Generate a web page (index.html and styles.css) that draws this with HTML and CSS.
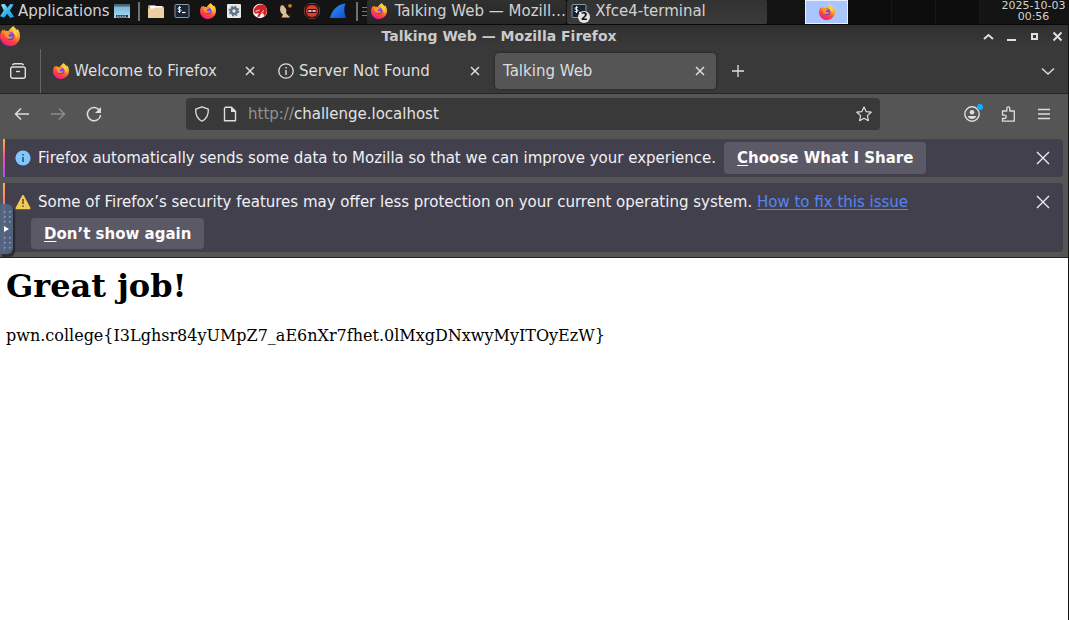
FILE: index.html
```html
<!DOCTYPE html>
<html lang="en">
<head>
<meta charset="utf-8">
<title>Talking Web</title>
<link rel="stylesheet" href="styles.css">
</head>
<body>
<svg class="defs" aria-hidden="true">
  <defs>
    <linearGradient id="flame" x1="0.8" y1="0" x2="0.3" y2="1">
      <stop offset="0" stop-color="#fff04a"/><stop offset="0.35" stop-color="#ffa52b"/><stop offset="0.65" stop-color="#ff4a3d"/><stop offset="1" stop-color="#f0138f"/>
    </linearGradient>
    <linearGradient id="globe" x1="0.5" y1="0" x2="0.5" y2="1">
      <stop offset="0" stop-color="#9a4dff"/><stop offset="1" stop-color="#5540d0"/>
    </linearGradient>
    <linearGradient id="fin" x1="0" y1="0" x2="1" y2="1">
      <stop offset="0" stop-color="#3c94ff"/><stop offset="1" stop-color="#0750c8"/>
    </linearGradient>
    <linearGradient id="xblue" x1="0" y1="0" x2="1" y2="1">
      <stop offset="0" stop-color="#b5ecff"/><stop offset="0.5" stop-color="#35b9f1"/><stop offset="1" stop-color="#0e9ce4"/>
    </linearGradient>
    <linearGradient id="desk" x1="0" y1="0" x2="0" y2="1">
      <stop offset="0" stop-color="#6fb0d2"/><stop offset="1" stop-color="#a9dcf3"/>
    </linearGradient>
    <symbol id="firefox" viewBox="0 0 16 16">
      <path fill="url(#flame)" d="M10.7 0c.6 1.2 2 2 2.8 3.2.3-.3.4-.6.4-1 1.600 1.600 2.100 3.800 2.100 5.900 0 4.400-3.600 7.900-8 7.900S0 12.500 0 8.200c0-2.100.8-4 2.100-5.500l.3 1.200 1.200-1.200.5 1.200c.8-.3 1.800-.2 2.600.3C7.600 2.400 9.100 1.300 10.700 0z"/>
      <circle cx="8.200" cy="7.800" r="3.300" fill="url(#globe)"/>
      <path fill="#ff9529" d="M3.600 4.200c1.300-.5 2.800-.2 3.600.8l1.700.3c-.4 1-1.600 1-2 1.700-.3.600 0 1.300.8 1.500 1 .3 1.700-.5 2.700.1-.6 1-1.800 1.600-3 1.500C4.800 9.900 3 7.200 3.600 4.200z"/>
      <path fill="#ffd43c" d="M10.800 2.200c2.600 2 3.600 5.200 2.300 8 .1-2-.7-3.300-2-4.300-1-.8-1.300-2.100-.3-3.700z"/>
    </symbol>
    <symbol id="terminal" viewBox="0 0 16 16">
      <rect x="1" y="1.500" width="14" height="13" rx="1" fill="#172536" stroke="#8a98a2"/>
      <path d="M7 4.500H5.400Q4 4.500 4 5.500T5.400 6.500Q7 6.500 7 7.500T5.400 8.500H3.800M5.500 3v7" fill="none" stroke="#fff" stroke-width="0.900"/>
      <path d="M8 9.500h3.500" stroke="#fff" stroke-width="1.200"/>
    </symbol>
    <symbol id="close" viewBox="0 0 16 16"><path d="M4 4l8 8M12 4l-8 8" stroke="currentColor" stroke-width="1.500" fill="none"/></symbol>
    <symbol id="dismiss" viewBox="0 0 16 16"><path d="M2 2l12 12M14 2L2 14" stroke="currentColor" stroke-width="1.300" fill="none"/></symbol>
  </defs>
</svg>

<header class="panel">
  <button class="apps" type="button">
    <svg viewBox="0 0 16 16"><path fill="url(#xblue)" d="M1 1l4-.5 3 4 3-4 3.500.5-4 6.500L15 14l-4 1.500-3.500-4.500-3 4L0 13.500l4-6z"/></svg>
    <span>Applications</span>
  </button>
  <nav class="launchers" aria-label="Launchers">
    <button type="button" aria-label="Show desktop"><svg viewBox="0 0 16 16"><path fill="url(#desk)" d="M0 1.500h16V15H0z"/><path fill="#546874" d="M0 1.500h16v2H0z"/><path fill="#26353e" d="M2 12h12v2.500H2z"/><path d="M3 13.200h10" stroke="#bde9ff" stroke-dasharray="1.500 1"/></svg></button>
    <i class="rule"></i>
    <button type="button" aria-label="Files"><svg viewBox="0 0 16 16"><path fill="#c49c6b" d="M1 2h6l1 1h7l1 2v10H0V3z"/><path fill="#fff" d="M2 3h12v4H2z"/><path fill="#edcfa4" d="M0 5.500h5.500l1-1H16V15H0z"/></svg></button>
    <button type="button" aria-label="Terminal"><svg><use href="#terminal"/></svg></button>
    <button type="button" aria-label="Firefox"><svg><use href="#firefox"/></svg></button>
    <button type="button" aria-label="Settings"><svg viewBox="0 0 16 16"><rect x="1" y="1" width="14" height="14" rx="1" fill="#e8eaea"/><circle cx="8" cy="8" r="3" fill="none" stroke="#607286" stroke-width="2.600"/><circle cx="8" cy="8" r="4.700" fill="none" stroke="#607286" stroke-width="1.400" stroke-dasharray="1.850 1.840"/></svg></button>
    <button type="button" aria-label="Ghidra"><svg viewBox="0 0 16 16"><circle cx="8" cy="8" r="7.200" fill="#f3f1f0"/><path fill="#d42020" d="M1.500 8.500C2 4 6 1 10 1.500c3.500.5 5 3.500 4.800 7-.3 2-1.200 3.500-2.600 4.500l-1-3-2 .5-2 3.500-2-.5 1.800-3.500-3.500.8z"/><path d="M3.500 8.500l4-1.500M9.500 9.500l2.500-2" stroke="#fff" stroke-width=".9"/></svg></button>
    <button type="button" aria-label="IDA"><svg viewBox="0 0 16 16"><path fill="#2a1a12" d="M3 1.500c3-1.500 6-1 7.500 1.500l2 6 1.500 5-4 1L3 9z"/><path fill="#dcbd9a" d="M2.500 3C4 1.500 6.500 2 7.500 4l1 3.500L8 10l4 4.500H3.500L5 11.500 3 10l-1-3z"/><path fill="#1d130e" d="M5 2l5 .5 1.500 4 .5 4-2.500 1-1-5z"/><circle cx="12" cy="2.800" r="1.900" fill="#c1801c"/></svg></button>
    <button type="button" aria-label="Cutter"><svg viewBox="0 0 16 16"><path fill="#281313" stroke="#80403a" stroke-width="0.800" d="M5 .5h6L15.500 5v6L11 15.500H5L.5 11V5z"/><circle cx="8" cy="8" r="6" fill="#e23b28"/><rect x="3.500" y="6" width="9" height="4" fill="#32100d"/><path d="M4.300 8h7.400" stroke="#fff" stroke-width="1.500" stroke-dasharray="3.200 1"/></svg></button>
    <button type="button" aria-label="Wireshark"><svg viewBox="0 0 16 16"><path fill="url(#fin)" d="M0 15C2 7 7 1.500 15.500.5c-2 4.500-1.500 9.500.5 14.500z"/></svg></button>
    <i class="rule"></i>
    <i class="grip"></i>
  </nav>
  <div class="tasks">
    <button class="task" type="button"><svg><use href="#firefox"/></svg><span>Talking Web — Mozill…</span></button>
    <button class="task task-last" type="button"><span class="task-icon"><svg><use href="#terminal"/></svg><b class="count">2</b></span><span>Xfce4-terminal</span></button>
  </div>
  <div class="pager">
    <button class="space space-on" type="button" aria-label="Workspace 1"><svg><use href="#firefox"/></svg></button>
    <button class="space" type="button" aria-label="Workspace 2"></button>
    <button class="space" type="button" aria-label="Workspace 3"></button>
    <button class="space" type="button" aria-label="Workspace 4"></button>
  </div>
  <time class="clock" datetime="2025-10-03T00:56">2025-10-03<br>00:56</time>
</header>

<div class="window">
  <div class="chrome">
    <div class="titlebar">
      <svg class="title-logo"><use href="#firefox"/></svg>
      <span class="title">Talking Web — Mozilla Firefox</span>
      <div class="win-buttons">
        <button type="button" aria-label="Shade"><svg viewBox="0 0 11 11"><path d="M1 8l4.500-4L10 8" fill="none" stroke="currentColor" stroke-width="2"/></svg></button>
        <button type="button" aria-label="Minimize"><svg viewBox="0 0 11 11"><path d="M1 9h9" stroke="currentColor" stroke-width="2"/></svg></button>
        <button type="button" aria-label="Maximize"><svg viewBox="0 0 11 11"><path d="M3 3h5v5H3z" fill="none" stroke="currentColor" stroke-width="2"/></svg></button>
        <button type="button" aria-label="Close"><svg viewBox="0 0 11 11"><path d="M1.500 1.500l8 8M9.500 1.500l-8 8" stroke="currentColor" stroke-width="2"/></svg></button>
      </div>
    </div>

    <div class="tabbar">
      <button class="tool tabs-view" type="button" aria-label="View recent browsing"><svg viewBox="0 0 16 16" fill="none" stroke="currentColor" stroke-width="1.400"><path d="M2.500 2.300Q3 .7 4.500.7h7q1.500 0 2 1.600"/><rect x=".7" y="4" width="14.600" height="11.300" rx="2"/><path d="M6 8.500h4"/></svg></button>
      <div class="tabs">
        <div class="tab"><svg><use href="#firefox"/></svg><span>Welcome to Firefox</span><button type="button" aria-label="Close tab"><svg><use href="#close"/></svg></button></div>
        <div class="tab"><svg viewBox="0 0 16 16"><circle cx="8" cy="8" r="7.200" fill="none" stroke="currentColor" stroke-width="1.300"/><path d="M8 7v5M8 4v1.500" stroke="currentColor" stroke-width="1.400"/></svg><span>Server Not Found</span><button type="button" aria-label="Close tab"><svg><use href="#close"/></svg></button></div>
        <div class="tab tab-on"><span>Talking Web</span><button type="button" aria-label="Close tab"><svg><use href="#close"/></svg></button></div>
      </div>
      <button class="tool new-tab" type="button" aria-label="New tab"><svg viewBox="0 0 16 16"><path d="M8 2v12M2 8h12" stroke="currentColor" stroke-width="1.300"/></svg></button>
      <button class="tool all-tabs" type="button" aria-label="List all tabs"><svg viewBox="0 0 16 16"><path d="M2 5.500l6 5.500 6-5.500" fill="none" stroke="currentColor" stroke-width="1.400"/></svg></button>
    </div>

    <div class="toolbar">
      <div class="nav">
        <button class="tool" type="button" aria-label="Back"><svg viewBox="0 0 16 16"><path d="M15 8H1.500M7 2.500L1.500 8 7 13.500" fill="none" stroke="currentColor" stroke-width="1.500"/></svg></button>
        <button class="tool" type="button" aria-label="Forward" disabled><svg viewBox="0 0 16 16"><path d="M1 8h13.500M9 2.500L14.500 8 9 13.500" fill="none" stroke="currentColor" stroke-width="1.500"/></svg></button>
        <button class="tool" type="button" aria-label="Reload"><svg viewBox="0 0 16 16"><path d="M13.500 4.500A6.600 6.600 0 1 0 14.600 9" fill="none" stroke="currentColor" stroke-width="1.500"/><path fill="currentColor" d="M15 1v6H9z"/></svg></button>
      </div>
      <div class="urlbar">
        <svg viewBox="0 0 16 16"><path d="M8 .8l6.300 2.400c.3 5-1.300 9.300-6.300 12-5-2.700-6.600-7-6.300-12z" fill="none" stroke="currentColor" stroke-width="1.300" stroke-linejoin="round"/></svg>
        <svg viewBox="0 0 16 16"><path d="M3.500 1.200h6l4 4v9.500h-11V2.200z" fill="none" stroke="currentColor" stroke-width="1.400" stroke-linejoin="round"/><path fill="currentColor" d="M9 1l5 5H9z"/></svg>
        <label for="url">http://</label><input id="url" type="text" value="challenge.localhost" spellcheck="false">
        <button class="tool" type="button" aria-label="Bookmark this page"><svg viewBox="0 0 16 16"><path d="M8 .9l2.100 4.700 5.100.6-3.800 3.400 1 5.100L8 12.200l-4.400 2.500 1-5.100L.8 6.200l5.100-.6z" fill="none" stroke="currentColor" stroke-width="1.200" stroke-linejoin="round"/></svg></button>
      </div>
      <div class="extras">
        <button class="tool account" type="button" aria-label="Account"><svg viewBox="0 0 16 16"><circle cx="8" cy="8" r="7.200" fill="none" stroke="currentColor" stroke-width="1.400"/><circle cx="8" cy="6.300" r="2.300" fill="currentColor"/><path fill="currentColor" d="M3.700 10h8.600c-.5 2-2.200 3-4.300 3s-3.800-1-4.300-3z"/></svg></button>
        <button class="tool" type="button" aria-label="Extensions"><svg viewBox="0 0 16 16"><path d="M2.500 7.500V5h4.300V2.500c0-2.300 3-2.300 3 0V5h4.500v10.200H2.500v-2.700h2c2.300 0 2.300-3.300 0-3.300h-2V7.500" fill="none" stroke="currentColor" stroke-width="1.300" stroke-linejoin="round"/></svg></button>
        <button class="tool" type="button" aria-label="Menu"><svg viewBox="0 0 16 16"><path d="M2 3.500h12M2 8h12M2 12.500h12" stroke="currentColor" stroke-width="1.300"/></svg></button>
      </div>
    </div>

    <div class="notices">
      <div class="notice">
        <svg class="notice-icon" viewBox="0 0 16 16"><circle cx="8" cy="8" r="7.600" fill="#80c6ff"/><path d="M8 7v5M8 4v1.600" stroke="#42404d" stroke-width="1.500"/></svg>
        <div class="notice-body"><span>Firefox automatically sends some data to Mozilla so that we can improve your experience.</span><button class="action" type="button"><u>C</u>hoose What I Share</button></div>
        <button class="tool" type="button" aria-label="Dismiss"><svg><use href="#dismiss"/></svg></button>
      </div>
      <div class="notice">
        <svg class="notice-icon" viewBox="0 0 16 16"><path d="M8 2l6.500 12.200h-13z" fill="#f6c955" stroke="#f6c955" stroke-width="2" stroke-linejoin="round"/><path d="M8 5v5M8 11.500V13" stroke="#42404d" stroke-width="1.400"/></svg>
        <div class="notice-body notice-stack"><span>Some of Firefox’s security features may offer less protection on your current operating system. <a href="#fix">How to fix this issue</a></span><button class="action" type="button"><u>D</u>on’t show again</button></div>
        <button class="tool" type="button" aria-label="Dismiss"><svg><use href="#dismiss"/></svg></button>
      </div>
    </div>
  </div>
  <main class="page">
    <h1>Great job!</h1>
    <p>pwn.college{I3Lghsr84yUMpZ7_aE6nXr7fhet.0lMxgDNxwyMyITOyEzW}</p>
  </main>
</div>

<button class="side-handle" type="button" aria-label="Open control bar"><i></i><svg viewBox="0 0 6 8"><path d="M0 1l5 3-5 3z" fill="#fff"/></svg><i></i></button>
</body>
</html>
```

FILE: styles.css
```css
* { box-sizing: border-box; }

body {
  margin: 0;
  min-height: 100vh;
  display: flex;
  flex-direction: column;
  background: #fff;
  color: #dedede;
  font: 15px/20px "DejaVu Sans", sans-serif;
}

button {
  margin: 0;
  padding: 0;
  border: 0;
  background: none;
  color: inherit;
  font: inherit;
}

svg { display: block; width: 16px; height: 16px; flex: none; }
.defs { position: absolute; width: 0; height: 0; }

/* Desktop panel */
.panel {
  display: flex;
  height: 25px;
  background: #141414;
  border-bottom: 1px solid #0a0a0a;
  color: #d2d2d2;
  white-space: nowrap;
}
.apps { display: flex; align-items: center; gap: 3px; padding: 0 4px 2px 0; }
.apps svg { width: 15px; }
.launchers { display: flex; align-items: center; gap: 10px; padding-bottom: 2px; }
.launchers > button:first-child { margin-right: -2px; }
.rule { width: 2px; height: 19px; margin-right: -2px; background: #707070; }
.grip {
  width: 5px;
  height: 9px;
  margin-left: -4px;
  background: repeating-linear-gradient(#777 0 1px, transparent 1px 4px);
}
.tasks { display: flex; flex: 0 1 400px; gap: 1px; min-width: 0; }
.task {
  display: flex;
  align-items: center;
  gap: 8px;
  flex: 1 1 0;
  min-width: 0;
  padding: 0 4px 2px;
  background: linear-gradient(#303030, #262626);
  border-radius: 2px;
}
.task-last { background: linear-gradient(#323232, #3b3b3b); }
.task-icon { position: relative; }
.count {
  position: absolute;
  right: -3px;
  bottom: -4px;
  width: 12px;
  height: 12px;
  border-radius: 50%;
  background: #e4e4e4;
  color: #111;
  font-size: 10px;
  line-height: 12px;
}
.pager { display: flex; margin-left: auto; background: #0d0d0d; }
.space {
  display: grid;
  place-items: center;
  width: 44px;
  height: 24px;
  border-right: 1px solid #171717;
}
.space-on { width: 43px; background: #aac6ff; border: 1px solid #e8f0ff; }
.clock {
  width: 89px;
  padding: 0 2px 0 20px;
  text-align: center;
  font-size: 11px;
  line-height: 11px;
}

/* Browser window */
.window {
  flex: 1;
  display: flex;
  flex-direction: column;
  border-right: 1px solid #141414;
}
.chrome { background: #555; border-bottom: 1px solid #22212a; }
.titlebar {
  display: grid;
  grid-template-columns: 100px 1fr 100px;
  height: 22px;
  align-items: center;
  background: linear-gradient(#303030, #393939);
}
.title-logo { width: 20px; height: 20px; }
.title { text-align: center; font-size: 14px; font-weight: bold; color: #cbcbcb; padding-right: 70px; }
.win-buttons { display: flex; justify-content: flex-end; gap: 12px; padding-right: 5px; }
.win-buttons svg { width: 11px; height: 11px; }

.tabbar {
  display: flex;
  align-items: center;
  height: 47px;
  padding-top: 2px;
  background: #393939;
  border-bottom: 1px solid #252525;
}
.tool { display: grid; place-items: center; flex: none; }
.tabs-view { width: 41px; height: 44px; padding-right: 4px; border-right: 1px solid #666; }
.tabs { display: flex; gap: 4px; flex: 0 1 671px; min-width: 0; margin-left: 4px; }
.tab {
  display: flex;
  align-items: center;
  flex: 1 1 0;
  min-width: 0;
  height: 36px;
  padding: 0 8px;
  gap: 5px;
  border-radius: 4px;
  white-space: nowrap;
}
.tab > span { flex: 1; }
.tab-on { background: #555; box-shadow: 0 0 3px #202020; }
.new-tab { width: 43px; height: 36px; }
.all-tabs { width: 40px; height: 36px; margin-left: auto; }

.toolbar { display: flex; align-items: center; height: 40px; padding: 0 16px 0 14px; }
.nav { display: flex; gap: 20px; flex: 0 0 172px; }
.nav .tool:disabled { color: #8c8c8c; }
.urlbar {
  display: flex;
  align-items: center;
  flex: 0 1 694px;
  min-width: 0;
  height: 32px;
  padding: 0 8px;
  background: #393939;
  border-radius: 4px;
}
.urlbar > svg + svg { margin: 0 10px 0 12px; }
.urlbar label { color: #929292; }
.urlbar input {
  flex: 1;
  min-width: 0;
  padding: 0;
  border: 0;
  outline: 0;
  background: none;
  color: #e2e2e2;
  font: inherit;
}
.extras { display: flex; gap: 20px; margin-left: auto; }
.account { position: relative; }
.account::after {
  content: "";
  position: absolute;
  top: -2px;
  right: -3px;
  width: 6px;
  height: 6px;
  border-radius: 50%;
  background: #00b3ff;
}

.notices { display: flex; flex-direction: column; gap: 6px; padding: 5px 5px 5px 3px; color: #f0f0f5; }
.notice {
  display: flex;
  align-items: flex-start;
  padding: 3px 12px 3px 12px;
  background: linear-gradient(#ffb13d, #ff4a9c 50%, #9059ff) left / 2px 100% no-repeat #42404d;
  border-radius: 0 4px 4px 0;
}
.notice-icon, .notice .tool { margin-top: 8px; }
.notice-icon { margin-right: 7px; }
.notice-body { display: flex; align-items: center; gap: 8px; flex: 1; min-width: 0; }
.notice-stack { flex-direction: column; align-items: flex-start; gap: 0; padding-top: 6px; }
.notice-stack .action { margin: 6px 0 0 -7px; height: 31px; }
.notice a { color: #5586f0; text-underline-offset: 2px; }
.action {
  height: 32px;
  padding: 0 13px;
  background: #5b5966;
  border-radius: 4px;
  color: #fbfbfe;
  font-weight: bold;
}
.action u { text-underline-offset: 2px; }

/* Document */
.page {
  flex: 1;
  padding: 8px 6px;
  background: #fff;
  color: #000;
  font-family: "DejaVu Serif", serif;
  font-size: 16px;
}
.page h1 { margin: 0 0 20px; font-size: 32px; line-height: 40px; }
.page p { margin: 0; }

/* Remote-desktop control handle */
.side-handle {
  position: absolute;
  left: 0;
  top: 204px;
  display: flex;
  flex-direction: column;
  align-items: center;
  justify-content: space-between;
  width: 13px;
  height: 50px;
  padding: 5px 0;
  border-radius: 0 6px 6px 0;
  background: rgba(82, 102, 132, 0.88);
  box-shadow: 2px 3px 1px rgba(30, 30, 35, 0.7);
}
.side-handle i {
  width: 10px;
  height: 14px;
  background: radial-gradient(circle, #8694ad 1px, transparent 1px) 0 0 / 5px 5px;
}
.side-handle svg { width: 6px; height: 8px; }
```
